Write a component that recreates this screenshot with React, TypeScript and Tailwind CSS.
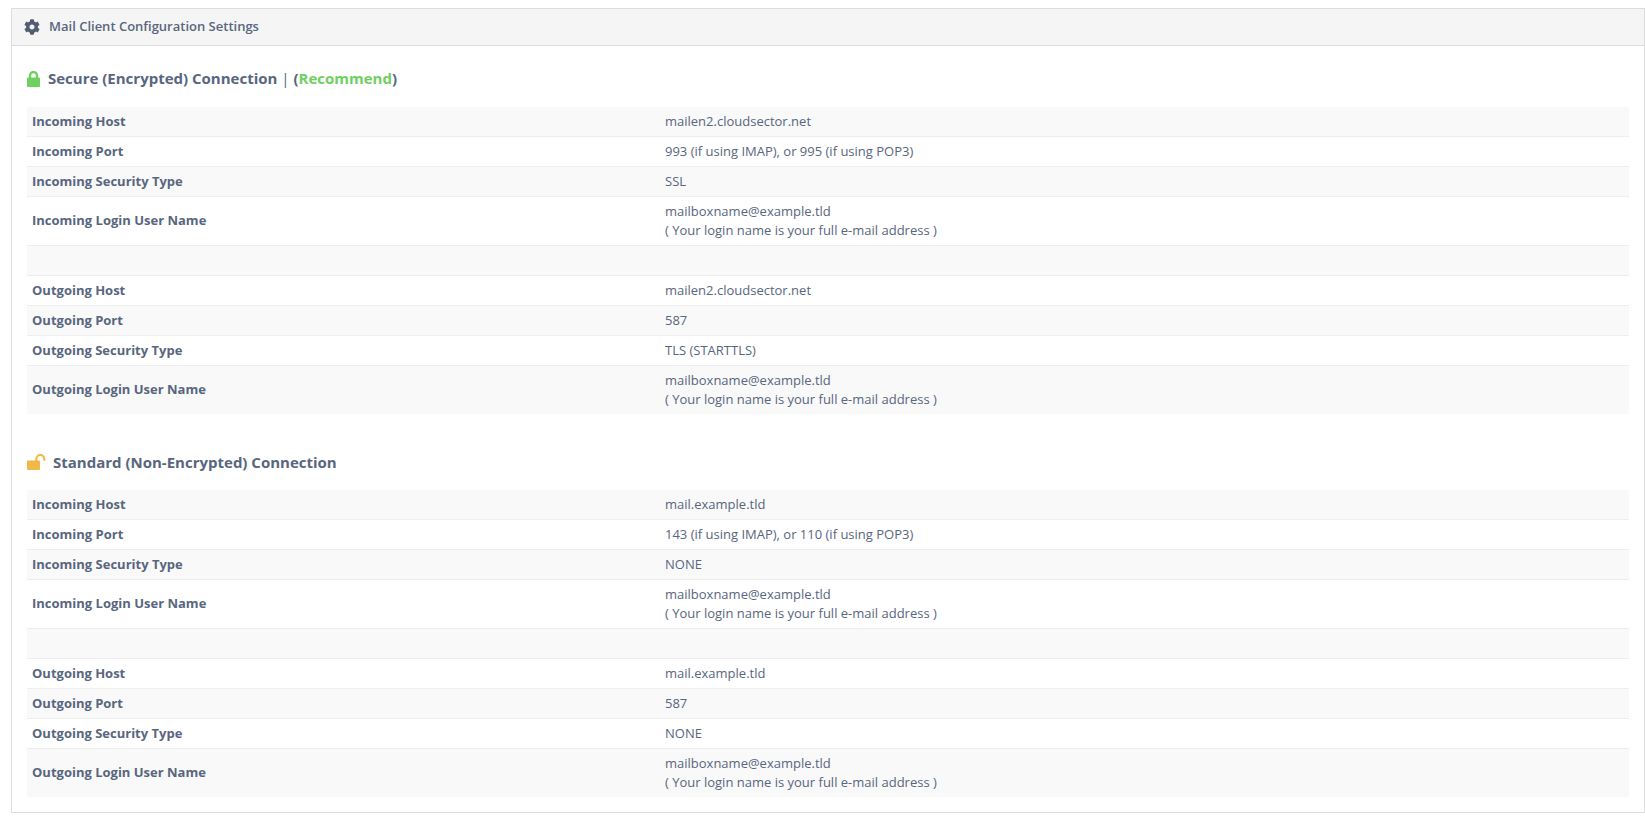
import { FaCog } from "react-icons/fa";

type Row = { label: string; value?: string; note?: boolean };

const note = "( Your login name is your full e-mail address )";
const login = "mailboxname@example.tld";

const secureRows: Row[] = [
  { label: "Incoming Host", value: "mailen2.cloudsector.net" },
  { label: "Incoming Port", value: "993 (if using IMAP), or 995 (if using POP3)" },
  { label: "Incoming Security Type", value: "SSL" },
  { label: "Incoming Login User Name", value: login, note: true },
  { label: "" },
  { label: "Outgoing Host", value: "mailen2.cloudsector.net" },
  { label: "Outgoing Port", value: "587" },
  { label: "Outgoing Security Type", value: "TLS (STARTTLS)" },
  { label: "Outgoing Login User Name", value: login, note: true },
];

const standardRows: Row[] = [
  { label: "Incoming Host", value: "mail.example.tld" },
  { label: "Incoming Port", value: "143 (if using IMAP), or 110 (if using POP3)" },
  { label: "Incoming Security Type", value: "NONE" },
  { label: "Incoming Login User Name", value: login, note: true },
  { label: "" },
  { label: "Outgoing Host", value: "mail.example.tld" },
  { label: "Outgoing Port", value: "587" },
  { label: "Outgoing Security Type", value: "NONE" },
  { label: "Outgoing Login User Name", value: login, note: true },
];

function SettingsTable({ rows }: { rows: Row[] }) {
  return (
    <div className="flex flex-col">
      {rows.map((row, i) => {
        const last = i === rows.length - 1;
        return (
          <div
            key={i}
            className={`flex items-center border-[#eeeeee] px-[5px] ${
              i % 2 === 0 ? "bg-[#f9f9f9]" : "bg-white"
            } ${last ? "h-[48px]" : row.note ? "h-[49px] border-b" : "h-[30px] border-b"}`}
          >
            <div className="w-[633px] shrink-0 font-bold text-[13px]">{row.label}</div>
            <div className="text-[13px] leading-[19px]">
              {row.value}
              {row.note && <div>{note}</div>}
            </div>
          </div>
        );
      })}
    </div>
  );
}

export default function App() {
  return (
    <div className="min-h-[823px] bg-white pt-2 pl-[11px] pb-[10px] font-['Open_Sans',sans-serif] text-[#58667e]">
      <div className="border border-[#dddddd]">
        <div className="flex h-[37px] items-center gap-[9px] border-b border-[#dddddd] bg-[#f5f5f5] px-3 text-[13px] font-semibold">
          <FaCog className="h-4 w-4 text-[#505d74]" />
          <span>Mail Client Configuration Settings</span>
        </div>
        <div className="px-[15px] pt-[22px] pb-[15px]">
          <h3 className="mb-[19px] flex h-[20px] items-center gap-2 text-[15px] font-bold">
            <svg viewBox="0 0 13 16" className="mt-[2px] h-4 w-[13px] text-[#6fd05f]">
              <rect x="0" y="6.5" width="13" height="9.5" rx="1" fill="currentColor" />
              <path d="M3 7V4.5a3.5 3.5 0 0 1 7 0V7" fill="none" stroke="currentColor" strokeWidth="2.4" />
            </svg>
            <span>
              Secure (Encrypted) Connection <span className="font-normal">|</span> (
              <span className="text-[#6fd05f]">Recommend</span>)
            </span>
          </h3>
          <SettingsTable rows={secureRows} />
          <h3 className="mt-[38px] mb-[18px] flex h-[20px] items-center gap-[7px] text-[15px] font-bold">
            <svg viewBox="0 0 19 16" className="h-4 w-[19px] text-[#f0b849]">
              <rect x="0" y="6.5" width="13" height="9.5" rx="1" fill="currentColor" />
              <path d="M9.3 7V5a4 4 0 0 1 8 0v1.7" fill="none" stroke="currentColor" strokeWidth="2.2" />
            </svg>
            <span>Standard (Non-Encrypted) Connection</span>
          </h3>
          <SettingsTable rows={standardRows} />
        </div>
      </div>
    </div>
  );
}
